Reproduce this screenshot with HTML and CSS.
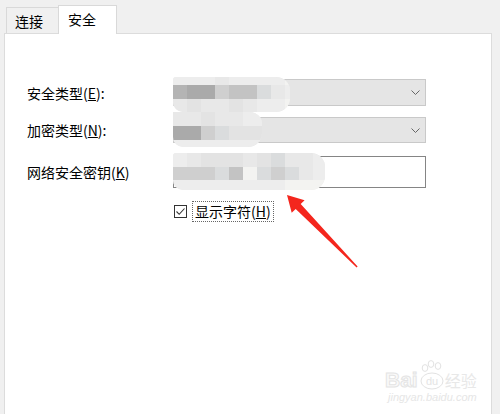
FILE: index.html
```html
<!DOCTYPE html>
<html lang="zh-CN">
<head>
    <meta charset="UTF-8">
    <title>无线网络属性 - 安全</title>
    <link rel="stylesheet" href="styles.css">
</head>
<body>
    <div class="tabs">
        <div class="tab">连接</div>
        <div class="tab active">安全</div>
    </div>

    <div class="panel">
        <div class="row first">
            <label class="label">安全类型(<u>E</u>):</label>
            <div class="select">
                <svg class="chevron" width="9" height="5" viewBox="0 0 9 5"><polyline points="0.5,0.5 4.5,4.5 8.5,0.5" fill="none" stroke="#666" stroke-width="1"/></svg>
            </div>
        </div>
        <div class="row second">
            <label class="label">加密类型(<u>N</u>):</label>
            <div class="select short">
                <svg class="chevron" width="9" height="5" viewBox="0 0 9 5"><polyline points="0.5,0.5 4.5,4.5 8.5,0.5" fill="none" stroke="#666" stroke-width="1"/></svg>
            </div>
        </div>
        <div class="row third">
            <label class="label">网络安全密钥(<u>K</u>)</label>
            <div class="input"></div>
        </div>
        <div class="row fourth">
            <span class="label"></span>
            <div class="check">
                <span class="box">
                    <svg width="11" height="11" viewBox="0 0 11 11"><polyline points="1.5,5.5 4.2,8.3 9.5,2.5" fill="none" stroke="#333" stroke-width="1.1"/></svg>
                </span>
                <span class="check-text">显示字符(<u>H</u>)</span>
            </div>
        </div>

        <!-- mosaic blur over the hidden values -->
        <div class="mosaic m1">
            <div class="strip h8"><i class="t8"></i><i class="t8"></i><i class="t8"></i><i class="t7"></i><i class="t8"></i><i class="t8"></i><i class="t8"></i><i class="t8"></i><i class="t9"></i></div>
            <div class="strip h14"><i class="t2"></i><i class="t1"></i><i class="t1"></i><i class="t4"></i><i class="t3"></i><i class="t3"></i><i class="t5"></i><i class="t7"></i><i class="t8"></i></div>
            <div class="strip h13"><i class="t7"></i><i class="t6"></i><i class="t7"></i><i class="t7"></i><i class="t6"></i><i class="t7"></i><i class="t8"></i><i class="t8"></i><i class="t9"></i></div>
        </div>
        <div class="mosaic m2">
            <div class="strip h14"><i class="t7"></i><i class="t7"></i><i class="t6"></i><i class="t7"></i><i class="t7"></i><i class="t8"></i><i class="t8"></i></div>
            <div class="strip h14"><i class="t1"></i><i class="t1"></i><i class="t4"></i><i class="t5"></i><i class="t6"></i><i class="t6"></i><i class="t6"></i></div>
            <div class="strip h7"><i class="t8"></i><i class="t8"></i><i class="t8"></i><i class="t8"></i><i class="t8"></i><i class="t8"></i><i class="t8"></i></div>
        </div>
        <div class="mosaic m3">
            <div class="strip h14"><i class="t8"></i><i class="t7"></i><i class="t6"></i><i class="t6"></i><i class="t6"></i><i class="t7"></i><i class="t6"></i><i class="t5"></i><i class="t7"></i><i class="t7"></i><i class="t8"></i></div>
            <div class="strip h13"><i class="t4"></i><i class="t4"></i><i class="t4"></i><i class="t5"></i><i class="t3"></i><i class="t9"></i><i class="t5"></i><i class="t4"></i><i class="t5"></i><i class="t7"></i><i class="t8"></i></div>
            <div class="strip h10"><i class="t8"></i><i class="t8"></i><i class="t8"></i><i class="t8"></i><i class="t8"></i><i class="t8"></i><i class="t8"></i><i class="t8"></i><i class="t9"></i><i class="t9"></i><i class="t9"></i></div>
        </div>

        <!-- Baidu jingyan watermark -->
        <div class="watermark">
            <div class="wm-top">
                <span class="wm-bai">Bai</span>
                <svg class="wm-paw" width="26" height="30" viewBox="0 0 26 30">
                    <ellipse cx="6" cy="8" rx="2.8" ry="3.4" fill="none" stroke="#e2e2e2"/>
                    <ellipse cx="12" cy="4" rx="2.8" ry="3.4" fill="none" stroke="#e2e2e2"/>
                    <ellipse cx="19" cy="6" rx="2.8" ry="3.4" fill="none" stroke="#e2e2e2"/>
                    <ellipse cx="13" cy="21" rx="11" ry="8" fill="none" stroke="#e2e2e2"/>
                    <text x="13" y="25" font-size="11" text-anchor="middle" fill="#e4e4e4" font-family="Liberation Sans, sans-serif">du</text>
                </svg>
                <span class="wm-jy">经验</span>
            </div>
            <div class="wm-url">jingyan.baidu.com</div>
        </div>
    </div>

    <svg class="arrow" width="500" height="414" viewBox="0 0 500 414">
        <polygon points="287,195 304.6,200.2 300.7,204.1 357.6,266.6 356.6,267.6 295.7,208.9 291.7,212.8" fill="#f4261d"/>
    </svg>
</body>
</html>
```

FILE: styles.css
```css
body {
    margin: 0;
    background: #f0f0f0;
    font-family: "Noto Sans CJK SC", "Noto Sans", sans-serif;
    font-size: 14px;
    color: #000;
    height: 414px;
    overflow: hidden;
    position: relative;
}

.tabs {
    display: flex;
    align-items: flex-end;
    padding: 5px 0 0 6px;
}

.tab {
    box-sizing: border-box;
    height: 26px;
    width: 52px;
    padding-left: 8px;
    line-height: 26px;
    border: 1px solid #d9d9d9;
    border-right: none;
    border-bottom: none;
    background: #f0f0f0;
}

.tab.active {
    height: 29px;
    width: 59px;
    padding-left: 9px;
    line-height: 27px;
    background: #fff;
    border-right: 1px solid #d9d9d9;
    margin-bottom: -1px;
    position: relative;
    z-index: 1;
}

.panel {
    position: relative;
    box-sizing: border-box;
    margin-left: 4px;
    width: 488px;
    height: 381px;
    padding: 45px 0 0 22px;
    background: #fff;
    border: 1px solid #dcdcdc;
    border-bottom: none;
}

.row {
    display: flex;
    align-items: center;
}

.row.second { margin-top: 11px; }
.row.third { margin-top: 13px; }
.row.fourth { margin-top: 13px; }

.label {
    width: 146px;
    flex-shrink: 0;
    white-space: nowrap;
}

.select {
    box-sizing: border-box;
    width: 253px;
    height: 27px;
    background: #e5e5e5;
    border: 1px solid #c9c9c9;
    display: flex;
    align-items: center;
    justify-content: flex-end;
}

.select.short {
    height: 26px;
}

.chevron {
    margin-right: 5px;
}

.input {
    box-sizing: border-box;
    width: 253px;
    height: 32px;
    background: #fff;
    border: 1px solid #858585;
}

.check {
    display: flex;
    align-items: center;
    height: 21px;
    margin-left: 1px;
}

.box {
    box-sizing: border-box;
    width: 13px;
    height: 13px;
    border: 1px solid #333;
    display: flex;
    align-items: center;
    justify-content: center;
}

.check-text {
    margin-left: 5px;
    padding: 0 2px;
    line-height: 19px;
    border: 1px dotted #666;
}

.mosaic {
    position: absolute;
    left: 168px;
    overflow: hidden;
    background: #eeeeee;
    border-radius: 3px 14px 14px 10px;
    filter: blur(0.5px);
}

.mosaic.m1 { top: 43px; width: 117px; height: 35px; }
.mosaic.m2 { top: 78px; width: 89px; height: 35px; border-radius: 0 12px 14px 10px; }
.mosaic.m3 { top: 119px; width: 152px; height: 37px; }

.strip {
    display: flex;
}

.strip i {
    flex: 0 0 14px;
}

.h7 { height: 7px; }
.h8 { height: 8px; }
.h10 { height: 10px; }
.h13 { height: 13px; }
.h14 { height: 14px; }

.t1 { background: #aaaaaa; }
.t2 { background: #b4b4b4; }
.t3 { background: #c3c3c3; }
.t4 { background: #cfcfcf; }
.t5 { background: #dadcdd; }
.t6 { background: #e3e3e3; }
.t7 { background: #e8e8e8; }
.t8 { background: #ededed; }
.t9 { background: #f3f3f1; }

.watermark {
    position: absolute;
    left: 380px;
    bottom: 10px;
    width: 100px;
    display: flex;
    flex-direction: column;
    color: #ebebeb;
    font-family: "Liberation Sans", sans-serif;
}

.wm-top {
    display: flex;
    align-items: flex-end;
}

.wm-bai {
    font-size: 21px;
    font-weight: bold;
    line-height: 20px;
    color: #fafafa;
    -webkit-text-stroke: 1px #e4e4e4;
}

.wm-paw {
    margin-left: 1px;
}

.wm-jy {
    font-family: "Noto Sans CJK SC", sans-serif;
    font-size: 16px;
    line-height: 20px;
    color: #e8e8e8;
}

.wm-url {
    margin-top: 1px;
    padding-left: 3px;
    font-size: 11px;
    line-height: 13px;
    font-style: italic;
    color: #e6e6e6;
}

.arrow {
    position: absolute;
    left: 0;
    top: 0;
    pointer-events: none;
    z-index: 2;
}
```
